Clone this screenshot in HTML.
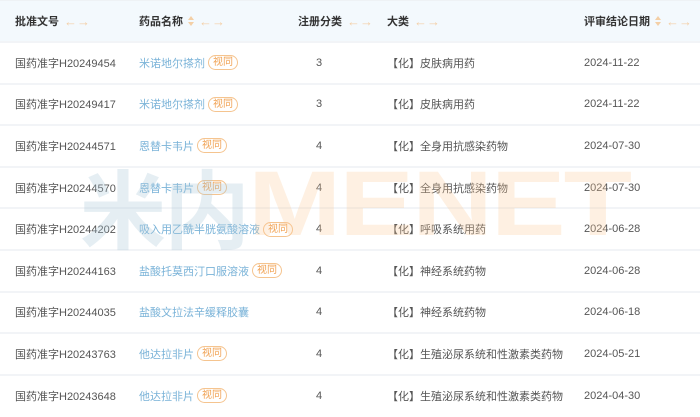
<!DOCTYPE html>
<html><head><meta charset="utf-8"><style>
*{margin:0;padding:0;box-sizing:border-box}
body{width:700px;height:417px;overflow:hidden;background:#fff;font-family:"Liberation Sans","Noto Sans CJK SC",sans-serif;font-size:11px;color:#555;position:relative}
.hd{position:absolute;left:0;top:0;width:700px;height:41px;background:#f3f9fd;border-top:1px solid #eef2f5}
.row{position:absolute;left:0;width:700px;height:41.6px;border-top:2px solid #f2f4f7}
.c{position:absolute;top:0;height:100%;display:flex;align-items:center;white-space:nowrap}
.h{font-weight:bold;color:#333}
.ar{color:#f3cfa6;font-weight:normal;margin-left:5px;letter-spacing:0;font-size:13px}
.sort{display:inline-block;margin-left:5px;width:6px;height:10px;position:relative}
.sort:before{content:"";position:absolute;left:0;top:0;border:3px solid transparent;border-bottom:4px solid #f3cfa6;border-top:0}
.sort:after{content:"";position:absolute;left:0;bottom:0;border:3px solid transparent;border-top:4px solid #f3cfa6;border-bottom:0}
.nm{color:#7ab3d8}
.tag{display:inline-block;margin-left:3px;border:1px solid #f5c48f;color:#f0a050;border-radius:8px;padding:0 4px;font-size:10px;line-height:13px}
.wm{position:absolute;font-weight:bold;line-height:1;pointer-events:none;letter-spacing:-2px}
</style></head><body>
<div class="hd">
<div class="c h" style="left:15px">批准文号<span class="ar">←→</span></div>
<div class="c h" style="left:139px">药品名称<span class="sort"></span><span class="ar">←→</span></div>
<div class="c h" style="left:298px">注册分类<span class="ar">←→</span></div>
<div class="c h" style="left:387px">大类<span class="ar">←→</span></div>
<div class="c h" style="left:584px">评审结论日期<span class="sort"></span><span class="ar">←→</span></div>
</div>
<div class="row" style="top:41px"><div class="c" style="left:15px">国药准字H20249454</div><div class="c nm" style="left:139px">米诺地尔搽剂<span class="tag">视同</span></div><div class="c" style="left:316px">3</div><div class="c" style="left:387px">【化】皮肤病用药</div><div class="c" style="left:584px">2024-11-22</div></div>
<div class="row" style="top:82.6px"><div class="c" style="left:15px">国药准字H20249417</div><div class="c nm" style="left:139px">米诺地尔搽剂<span class="tag">视同</span></div><div class="c" style="left:316px">3</div><div class="c" style="left:387px">【化】皮肤病用药</div><div class="c" style="left:584px">2024-11-22</div></div>
<div class="row" style="top:124.2px"><div class="c" style="left:15px">国药准字H20244571</div><div class="c nm" style="left:139px">恩替卡韦片<span class="tag">视同</span></div><div class="c" style="left:316px">4</div><div class="c" style="left:387px">【化】全身用抗感染药物</div><div class="c" style="left:584px">2024-07-30</div></div>
<div class="row" style="top:165.8px"><div class="c" style="left:15px">国药准字H20244570</div><div class="c nm" style="left:139px">恩替卡韦片<span class="tag">视同</span></div><div class="c" style="left:316px">4</div><div class="c" style="left:387px">【化】全身用抗感染药物</div><div class="c" style="left:584px">2024-07-30</div></div>
<div class="row" style="top:207.4px"><div class="c" style="left:15px">国药准字H20244202</div><div class="c nm" style="left:139px">吸入用乙酰半胱氨酸溶液<span class="tag">视同</span></div><div class="c" style="left:316px">4</div><div class="c" style="left:387px">【化】呼吸系统用药</div><div class="c" style="left:584px">2024-06-28</div></div>
<div class="row" style="top:249px"><div class="c" style="left:15px">国药准字H20244163</div><div class="c nm" style="left:139px">盐酸托莫西汀口服溶液<span class="tag">视同</span></div><div class="c" style="left:316px">4</div><div class="c" style="left:387px">【化】神经系统药物</div><div class="c" style="left:584px">2024-06-28</div></div>
<div class="row" style="top:290.6px"><div class="c" style="left:15px">国药准字H20244035</div><div class="c nm" style="left:139px">盐酸文拉法辛缓释胶囊</div><div class="c" style="left:316px">4</div><div class="c" style="left:387px">【化】神经系统药物</div><div class="c" style="left:584px">2024-06-18</div></div>
<div class="row" style="top:332.2px"><div class="c" style="left:15px">国药准字H20243763</div><div class="c nm" style="left:139px">他达拉非片<span class="tag">视同</span></div><div class="c" style="left:316px">4</div><div class="c" style="left:387px">【化】生殖泌尿系统和性激素类药物</div><div class="c" style="left:584px">2024-05-21</div></div>
<div class="row" style="top:373.8px"><div class="c" style="left:15px">国药准字H20243648</div><div class="c nm" style="left:139px">他达拉非片<span class="tag">视同</span></div><div class="c" style="left:316px">4</div><div class="c" style="left:387px">【化】生殖泌尿系统和性激素类药物</div><div class="c" style="left:584px">2024-04-30</div></div>
<div class="wm" style="left:80px;top:170px;color:rgba(170,200,215,0.3);font-size:86px">米内</div>
<div class="wm" style="left:248px;top:158px;color:rgba(250,200,150,0.28);font-size:112px;transform:scaleY(0.82);transform-origin:top left">MENET</div>
</body></html>
